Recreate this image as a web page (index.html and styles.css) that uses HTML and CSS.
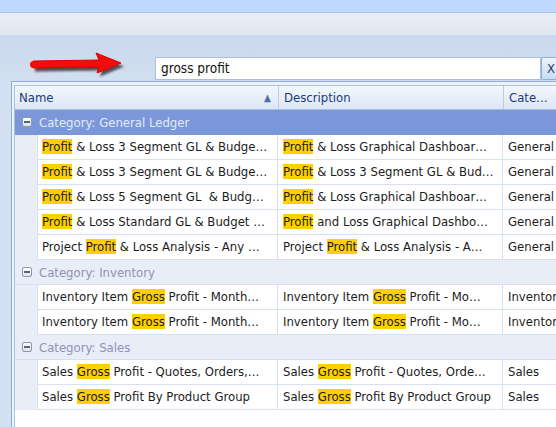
FILE: index.html
```html
<!DOCTYPE html>
<html>
<head>
<meta charset="utf-8">
<link rel="stylesheet" href="styles.css">
</head>
<body>
<div class="topband"></div>
<div class="toolbar"></div>
<div class="searcharea">
  <svg class="arrow" width="100" height="30" viewBox="0 0 100 30">
    <defs>
      <filter id="blur" x="-20%" y="-50%" width="140%" height="200%"><feGaussianBlur stdDeviation="1.2"/></filter>
    </defs>
    <path d="M7,13 L74,12 L71,5 L96,15 L72,25 L74,19 L7,20 Z" fill="#2a1a1a" opacity="0.75" filter="url(#blur)" transform="translate(2,2.5)"/>
    <path d="M7,12 L73,11 L70,4 L95,14 L71,24 L73,18 L7,19 Z" fill="#f20d0d" stroke="#e00000" stroke-width="1" stroke-linejoin="round"/>
    <circle cx="7.5" cy="15.5" r="3.5" fill="#f20d0d"/>
  </svg>
  <div class="searchbox">gross profit</div>
  <div class="clearbtn">X</div>
</div>
<div class="panel">
  <div class="grid">
    <div class="header">
      <div class="hcell hname"><span>Name</span><span class="sort">▲</span></div>
      <div class="hcell hdesc">Description</div>
      <div class="hcell hcat">Cate…</div>
    </div>

    <div class="group focused"><span class="minus"></span>Category: General Ledger</div>
    <div class="row"><div class="indent"></div><div class="cell name"><mark>Profit</mark> &amp; Loss 3 Segment GL &amp; Budge…</div><div class="cell desc"><mark>Profit</mark> &amp; Loss Graphical Dashboar…</div><div class="cell cat">General</div></div>
    <div class="row"><div class="indent"></div><div class="cell name"><mark>Profit</mark> &amp; Loss 3 Segment GL &amp; Budge…</div><div class="cell desc"><mark>Profit</mark> &amp; Loss 3 Segment GL &amp; Bud…</div><div class="cell cat">General</div></div>
    <div class="row"><div class="indent"></div><div class="cell name"><mark>Profit</mark> &amp; Loss 5 Segment GL&nbsp; &amp; Budg…</div><div class="cell desc"><mark>Profit</mark> &amp; Loss Graphical Dashboar…</div><div class="cell cat">General</div></div>
    <div class="row"><div class="indent"></div><div class="cell name"><mark>Profit</mark> &amp; Loss Standard GL &amp; Budget …</div><div class="cell desc"><mark>Profit</mark> and Loss Graphical Dashbo…</div><div class="cell cat">General</div></div>
    <div class="row"><div class="indent"></div><div class="cell name">Project <mark>Profit</mark> &amp; Loss Analysis - Any …</div><div class="cell desc">Project <mark>Profit</mark> &amp; Loss Analysis - A…</div><div class="cell cat">General</div></div>

    <div class="group"><span class="minus"></span>Category: Inventory</div>
    <div class="row"><div class="indent"></div><div class="cell name">Inventory Item <mark>Gross</mark> Profit - Month…</div><div class="cell desc">Inventory Item <mark>Gross</mark> Profit - Mo…</div><div class="cell cat">Inventory</div></div>
    <div class="row"><div class="indent"></div><div class="cell name">Inventory Item <mark>Gross</mark> Profit - Month…</div><div class="cell desc">Inventory Item <mark>Gross</mark> Profit - Mo…</div><div class="cell cat">Inventory</div></div>

    <div class="group"><span class="minus"></span>Category: Sales</div>
    <div class="row"><div class="indent"></div><div class="cell name">Sales <mark>Gross</mark> Profit - Quotes, Orders,…</div><div class="cell desc">Sales <mark>Gross</mark> Profit - Quotes, Orde…</div><div class="cell cat">Sales</div></div>
    <div class="row"><div class="indent"></div><div class="cell name">Sales <mark>Gross</mark> Profit By Product Group</div><div class="cell desc">Sales <mark>Gross</mark> Profit By Product Group</div><div class="cell cat">Sales</div></div>
  </div>
</div>
</body>
</html>
```

FILE: styles.css
```css
html, body {
  margin: 0;
  padding: 0;
  overflow: hidden;
}
body {
  width: 556px;
  height: 427px;
  background: #d3e1f2;
  font-family: "DejaVu Sans Condensed", "DejaVu Sans", sans-serif;
  font-size: 13px;
  color: #1c1c1c;
}
.topband {
  height: 12px;
  background: #bed9fb;
  border-bottom: 1px solid #a9c6ea;
}
.toolbar {
  height: 22px;
  background: linear-gradient(#e9eef5, #dfe6f0);
}
.searcharea {
  height: 46px;
  background: linear-gradient(#c9d8ec, #d1dff0);
  display: flex;
  align-items: flex-start;
  overflow: hidden;
}
.searcharea > * {
  flex-shrink: 0;
}
.arrow {
  margin-top: 14px;
  margin-left: 26px;
}
.searchbox {
  box-sizing: border-box;
  margin-top: 22px;
  margin-left: 29px;
  width: 386px;
  height: 23px;
  background: #fff;
  border: 1px solid #a8bfdd;
  line-height: 21px;
  padding-left: 5px;
  color: #111;
  font-size: 13.5px;
}
.clearbtn {
  box-sizing: border-box;
  margin-top: 22px;
  width: 30px;
  height: 23px;
  border: 1px solid #8eaed6;
  border-radius: 2px;
  background: linear-gradient(#edf3fb, #c9dbf2);
  line-height: 21px;
  padding-left: 5px;
  color: #2b3f66;
}
.panel {
  box-sizing: border-box;
  margin-left: 11px;
  border-left: 1px solid #8caddb;
  border-top: 1px solid #8caddb;
  background: #eef3fa;
  padding: 3px 0 0 2px;
  height: 347px;
  overflow: hidden;
}
.grid {
  box-sizing: border-box;
  border-left: 1px solid #a9c2e2;
  border-top: 1px solid #a9c2e2;
  background: #fff;
  height: 343px;
  overflow: hidden;
}
.header {
  display: flex;
  height: 23px;
  border-bottom: 1px solid #a8c0e0;
  background: linear-gradient(#f4f8fd, #e6eef8 55%, #dce7f5);
  color: #1b3b7c;
}
.hcell {
  box-sizing: border-box;
  flex-shrink: 0;
  height: 23px;
  line-height: 23px;
  padding-left: 4px;
  border-right: 1px solid #b9cde6;
  white-space: nowrap;
  overflow: hidden;
}
.hname {
  width: 264px;
  display: flex;
  justify-content: space-between;
  padding-right: 7px;
}
.sort {
  font-size: 10px;
  color: #4d6fa6;
}
.hdesc {
  width: 225px;
  padding-left: 5px;
}
.hcat {
  width: 90px;
  padding-left: 5px;
}
.group {
  height: 24px;
  border-bottom: 1px solid #d6e0f0;
  background: #e8edf7;
  color: #8e93b6;
  display: flex;
  align-items: center;
  white-space: nowrap;
}
.group.focused {
  background: #7b97d9;
  color: #e3eaf9;
  border-bottom-color: #7b97d9;
}
.minus {
  box-sizing: border-box;
  width: 10px;
  height: 10px;
  margin-left: 7px;
  margin-right: 7px;
  border: 1px solid #8d98ad;
  border-radius: 2px;
  background: linear-gradient(#ffffff, #dde3ec);
  position: relative;
}
.minus::after {
  content: "";
  position: absolute;
  left: 1px;
  right: 1px;
  top: 3px;
  height: 2px;
  background: #5a6478;
}
.row {
  display: flex;
  height: 25px;
}
.row > * {
  flex-shrink: 0;
}
.indent {
  width: 22px;
  background: #e8edf7;
}
.cell {
  box-sizing: border-box;
  height: 25px;
  line-height: 24px;
  border-bottom: 1px solid #d6e0f0;
  border-right: 1px solid #d6e0f0;
  padding-left: 4px;
  white-space: nowrap;
  overflow: hidden;
}
.name {
  width: 241px;
  border-left: 1px solid #d6e0f0;
}
.desc {
  width: 225px;
  padding-left: 5px;
}
.cat {
  width: 90px;
  padding-left: 5px;
}
mark {
  background: #ffd000;
  color: inherit;
}
```
